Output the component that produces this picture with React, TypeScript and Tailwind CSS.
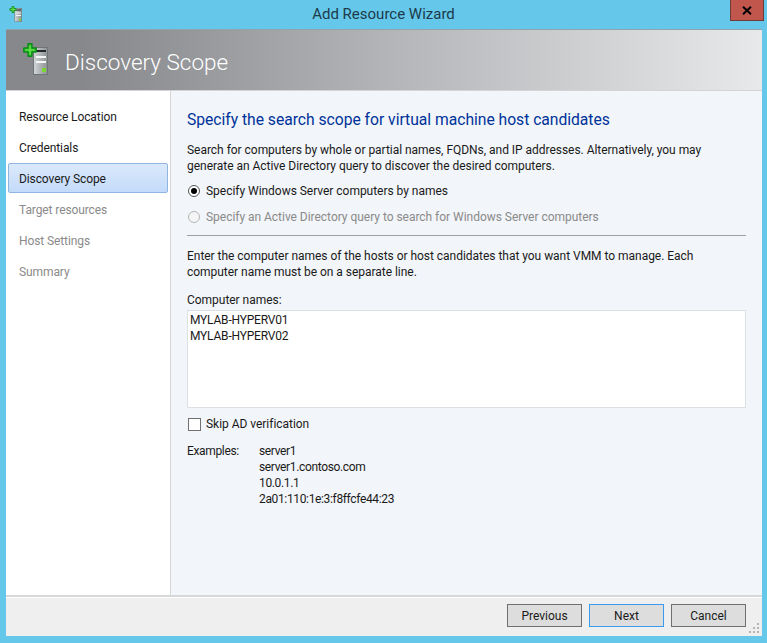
import React from "react";

const FONT = "font-['Roboto','Noto_Sans',sans-serif]";

function ServerIcon({ big }: { big?: boolean }) {
  const s = big ? 32 : 16;
  const id = big ? "sb" : "ss";
  return (
    <svg width={s} height={s} viewBox="0 0 32 32" className="block">
      <defs>
        <linearGradient id={id} x1="0" x2="1" y1="0" y2="0">
          <stop offset="0" stopColor="#d4d7d8" />
          <stop offset="1" stopColor="#8b9092" />
        </linearGradient>
      </defs>
      <rect x="13.5" y="4.5" width="14" height="27" fill={`url(#${id})`} stroke="#6f7476" strokeWidth="1" />
      <rect x="16" y="7" width="10" height="2" fill="#26292b" />
      <rect x="16" y="13" width="10" height="2" fill="#f4f6f6" />
      <rect x="16" y="18" width="10" height="2" fill="#f4f6f6" />
      <rect x="22" y="25" width="4" height="4" fill="#7bd62f" />
      <path d="M8 0.8h4v4.2h4.2v4H12v4.2H8V9H3.8V5H8z" fill="#31c02e" stroke="#0b8a18" strokeWidth="1.4" strokeLinejoin="round" />
      <path d="M9.2 2.5h1.6v3.7h3.7v1.6h-3.7v3.7H9.2V7.8H5.5V6.2h3.7z" fill="#63dc4a" />
    </svg>
  );
}

function NavItem({ label, state }: { label: string; state?: "active" | "disabled" }) {
  return (
    <div
      className={
        "h-[30px] mb-px pl-[10px] pt-[2px] flex items-center rounded-[2px] border tracking-[-0.1px] " +
        (state === "active"
          ? "border-[#8fb5e0] bg-gradient-to-b from-[#dbe9fb] to-[#c3dbfa] text-[#1a1a1a]"
          : state === "disabled"
          ? "border-transparent text-[#8a8a8a]"
          : "border-transparent text-[#1a1a1a]")
      }
    >
      {label}
    </div>
  );
}

function Btn({ label, focus }: { label: string; focus?: boolean }) {
  return (
    <button
      className={
        "w-[75px] h-[23px] bg-[#dddddd] border text-[12px] text-[#1a1a1a] flex items-center justify-center " +
        (focus ? "border-[#3c9bf0]" : "border-[#707070]")
      }
    >
      {label}
    </button>
  );
}

export default function App() {
  return (
    <div className={`${FONT} w-[767px] h-[643px] bg-[#65c8ea] flex flex-col text-[12px] leading-[16px] text-[#1a1a1a] overflow-hidden`}>
      <div className="h-[29px] flex items-start relative">
        <div className="w-[8px]" />
        <div className="mt-[6px]">
          <ServerIcon />
        </div>
        <div className="absolute left-0 right-0 top-[4px] text-center text-[15px] leading-[20px] text-[#1c3a4a]">Add Resource Wizard</div>
        <div className="ml-auto mr-[3px] w-[34px] h-[21px] bg-[#c0564c] border border-[#6e3a3a] border-t-0 flex items-center justify-center relative">
          <svg width="10" height="9" viewBox="0 0 10 9">
            <path d="M1 0.8l8 7.4M9 0.8l-8 7.4" stroke="#000" strokeWidth="2" />
          </svg>
        </div>
      </div>

      <div className="ml-[6px] mr-[5px] flex-1 flex flex-col min-h-0">
        <div className="h-[62px] border-t border-t-[#8fa3ad] border-b border-b-[#d4d4d4] bg-gradient-to-r from-[#86888b] from-10% via-[#b2b4b7] via-50% to-[#e8e9ea] flex items-center pl-[14px]">
          <div className="-mt-[2px]">
            <ServerIcon big />
          </div>
          <div className="ml-[13px] mt-[3px] text-[22.5px] leading-[32px] text-white font-light">Discovery Scope</div>
        </div>

        <div className="flex-1 flex min-h-0">
          <div className="w-[164px] bg-white pt-[10px] px-[2px]">
            <NavItem label="Resource Location" />
            <NavItem label="Credentials" />
            <NavItem label="Discovery Scope" state="active" />
            <NavItem label="Target resources" state="disabled" />
            <NavItem label="Host Settings" state="disabled" />
            <NavItem label="Summary" state="disabled" />
          </div>
          <div className="flex-1 border-l border-l-[#d6d6d6] bg-[#f2f5f9] pl-[16px] pr-[16px] pt-[18px] tracking-[-0.03px]">
            <div className="text-[15.7px] leading-[22px] text-[#003399]">Specify the search scope for virtual machine host candidates</div>
            <div className="mt-[11px]">
              Search for computers by whole or partial names, FQDNs, and IP addresses. Alternatively, you may generate an Active Directory query to discover the desired computers.
            </div>
            <div className="mt-[9px] h-[16px] flex items-center">
              <span className="ml-px w-[12px] h-[12px] rounded-full border border-[#555] bg-white flex items-center justify-center">
                <span className="w-[6px] h-[6px] rounded-full bg-black" />
              </span>
              <span className="ml-[6px]">Specify Windows Server computers by names</span>
            </div>
            <div className="mt-[10px] h-[16px] flex items-center text-[#8a8a8a]">
              <span className="ml-px w-[12px] h-[12px] rounded-full border border-[#b5b5b5] bg-[#f5f5f5]" />
              <span className="ml-[6px]">Specify an Active Directory query to search for Windows Server computers</span>
            </div>
            <div className="mt-[10px] h-px bg-[#a0a0a0]" />
            <div className="mt-[12px]">
              Enter the computer names of the hosts or host candidates that you want VMM to manage. Each computer name must be on a separate line.
            </div>
            <div className="mt-[12px]">Computer names:</div>
            <div className="mt-[2px] h-[98px] bg-white border border-[#dcdfe3] pl-[2px] pt-px text-[#1a1a1a] tracking-[-0.2px]">
              <div>MYLAB-HYPERV01</div>
              <div>MYLAB-HYPERV02</div>
            </div>
            <div className="mt-[8px] h-[16px] flex items-center">
              <span className="ml-px w-[13px] h-[13px] border border-[#707070] bg-white" />
              <span className="ml-[5px]">Skip AD verification</span>
            </div>
            <div className="mt-[11px] flex tracking-[-0.35px]">
              <div className="w-[72px]">Examples:</div>
              <div>
                <div>server1</div>
                <div>server1.contoso.com</div>
                <div>10.0.1.1</div>
                <div>2a01:110:1e:3:f8ffcfe44:23</div>
              </div>
            </div>
          </div>
        </div>

        <div className="h-[41px] border-t-2 border-t-[#d8d8d8] bg-[#efefef] flex items-start justify-end gap-[7px] pr-[16px] pt-[7px] relative">
          <div className="absolute left-0 right-0 top-0 h-px bg-white" />
          <Btn label="Previous" />
          <Btn label="Next" focus />
          <Btn label="Cancel" />
          <svg width="11" height="11" viewBox="0 0 11 11" className="absolute right-[2px] bottom-[2px]">
            <path d="M8 0h2v2H8zM4 4h2v2H4zM8 4h2v2H8zM0 8h2v2H0zM4 8h2v2H4zM8 8h2v2H8z" fill="#b4b4b4" />
          </svg>
        </div>
      </div>
      <div className="h-[7px]" />
    </div>
  );
}
